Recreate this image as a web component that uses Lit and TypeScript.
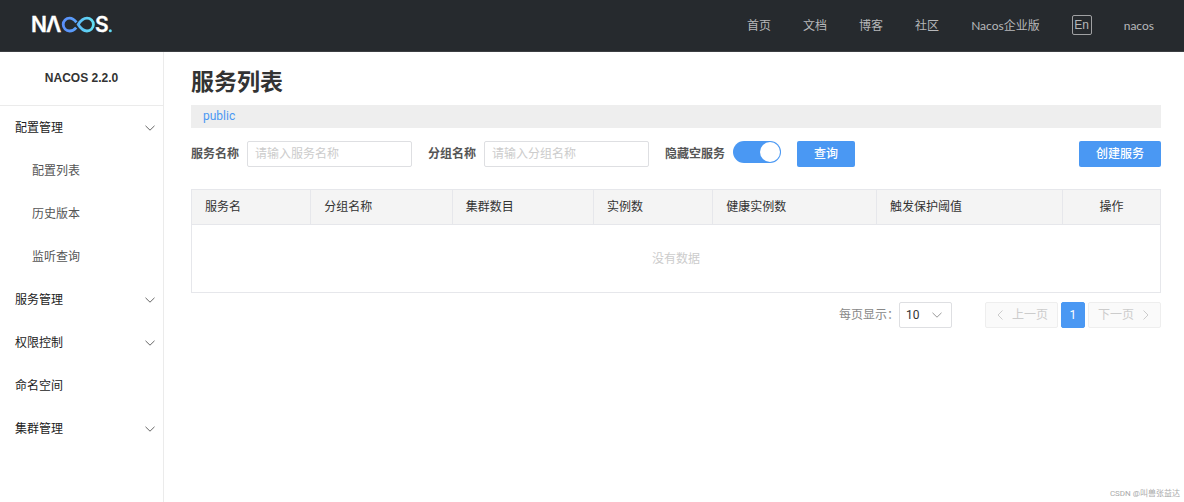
import { LitElement, html, css, svg, nothing } from "lit";
import { customElement, state } from "lit/decorators.js";

interface MenuItem {
  label: string;
  children?: string[];
  open?: boolean;
}

const NAV = ["首页", "文档", "博客", "社区", "Nacos企业版"];

const MENU: MenuItem[] = [
  { label: "配置管理", open: true, children: ["配置列表", "历史版本", "监听查询"] },
  { label: "服务管理", children: ["服务列表", "订阅者列表"] },
  { label: "权限控制", children: ["用户列表", "角色管理", "权限管理"] },
  { label: "命名空间" },
  { label: "集群管理", children: ["节点列表"] },
];

const COLUMNS = ["服务名", "分组名称", "集群数目", "实例数", "健康实例数", "触发保护阈值", "操作"];

const arrow = (points: string) => html`
  <svg class="arrow" viewBox="0 0 10 10" aria-hidden="true">
    ${svg`<polyline points=${points}></polyline>`}
  </svg>
`;
const arrowDown = () => arrow("0.5,2.8 5,7.2 9.5,2.8");
const arrowLeft = () => arrow("7.5,0.5 3,5 7.5,9.5");
const arrowRight = () => arrow("2.5,0.5 7,5 2.5,9.5");

const arrowStyles = css`
  .arrow {
    width: 10px;
    height: 10px;
    flex: none;
    fill: none;
    stroke: currentColor;
    stroke-width: 1;
  }
`;

@customElement("nacos-header")
export class NacosHeader extends LitElement {
  static styles = css`
    :host {
      display: block;
    }
    .bar {
      display: flex;
      align-items: center;
      justify-content: space-between;
      box-sizing: border-box;
      height: 52px;
      padding: 0 30px 2px 31px;
      background: #262a2e;
      border-bottom: 1px solid #3c3f43;
    }
    .logo {
      display: block;
      width: 82px;
      height: 32px;
      overflow: visible;
    }
    .word {
      font: 600 21px "Inter", sans-serif;
      fill: #fff;
      stroke: #fff;
      stroke-width: 0.3;
    }
    .nav {
      display: flex;
      align-items: center;
      gap: 32px;
      font-size: 12px;
    }
    .link {
      padding-top: 2px;
      color: #b7b8ba;
      text-decoration: none;
      font-family: Lato, "Noto Sans CJK SC", sans-serif;
    }
    .lang {
      box-sizing: border-box;
      width: 20px;
      height: 20px;
      padding: 0;
      border: 1px solid #a0a1a3;
      border-radius: 2px;
      background: none;
      color: #b7b8ba;
      font: 12px/18px "Liberation Sans", sans-serif;
    }
  `;

  render() {
    return html`
      <header class="bar">
        <svg class="logo" viewBox="0 -6 82 32" role="img" aria-label="NACOS.">
          <defs>
            <linearGradient id="loop" gradientUnits="userSpaceOnUse" x1="31" y1="0" x2="64" y2="0">
              <stop offset="0" stop-color="#5a8dfb"></stop>
              <stop offset="0.45" stop-color="#5aa2fa"></stop>
              <stop offset="0.55" stop-color="#5cc0f5"></stop>
              <stop offset="1" stop-color="#62e2f2"></stop>
            </linearGradient>
          </defs>
          <text class="word" x="0" y="17">N</text>
          <text class="word" x="15" y="17">Λ</text>
          <path
            d="M45.2 12.6C43.4 14.8 41.6 16 38.6 16A6.4 6.4 0 0 1 38.6 3.2C41.6 3.2 43.6 5 45.4 7.4"
            fill="none" stroke="url(#loop)" stroke-width="2.8"></path>
          <path
            d="M47.2 9.6C49.4 6 52 3.2 56 3.2A6.4 6.4 0 0 1 56 16C52 16 49.4 13.2 47.2 9.6Z"
            fill="none" stroke="url(#loop)" stroke-width="2.8"></path>
          <text class="word" x="64" y="17">S</text>
          <circle cx="79.3" cy="15.8" r="1.5" fill="#62d8f2"></circle>
        </svg>
        <nav class="nav">
          ${NAV.map((n) => html`<a class="link" href="#">${n}</a>`)}
          <button class="lang" type="button">En</button>
          <a class="link" href="#">nacos</a>
        </nav>
      </header>
    `;
  }
}

@customElement("nacos-menu")
export class NacosMenu extends LitElement {
  static styles = [
    arrowStyles,
    css`
      :host {
        display: block;
        border-right: 1px solid #ebebeb;
      }
      .version {
        margin: 0;
        border-bottom: 1px solid #ebebeb;
        color: #333;
        font: 700 12px/53px "Liberation Sans", sans-serif;
        text-align: center;
      }
      .list {
        margin: 0;
        padding: 0;
        list-style: none;
      }
      .item {
        display: flex;
        align-items: center;
        justify-content: space-between;
        box-sizing: border-box;
        width: 100%;
        height: 43px;
        padding: 0 8px 0 15px;
        border: 0;
        background: none;
        color: #222;
        font: inherit;
        text-decoration: none;
      }
      .sub {
        padding-left: 32px;
        color: #555;
      }
      .arrow {
        color: #666;
      }
    `,
  ];

  @state() private items = MENU;

  private toggle(index: number) {
    this.items = this.items.map((m, i) => (i === index ? { ...m, open: !m.open } : m));
  }

  render() {
    return html`
      <h2 class="version">NACOS 2.2.0</h2>
      <ul class="list">
        ${this.items.map(
          (m, i) => html`
            <li>
              ${m.children
                ? html`<button
                    class="item"
                    type="button"
                    aria-expanded=${m.open ? "true" : "false"}
                    @click=${() => this.toggle(i)}
                  >
                    ${m.label}${arrowDown()}
                  </button>`
                : html`<a class="item" href="#">${m.label}</a>`}
              ${m.children && m.open
                ? html`<ul class="list">
                    ${m.children.map((c) => html`<li><a class="item sub" href="#">${c}</a></li>`)}
                  </ul>`
                : nothing}
            </li>
          `
        )}
      </ul>
    `;
  }
}

@customElement("service-list")
export class ServiceList extends LitElement {
  static styles = [
    arrowStyles,
    css`
      :host {
        display: block;
        padding: 13px 23px 24px 27px;
      }
      .title {
        margin: 0;
        color: #333;
        font-size: 23px;
        font-weight: 700;
        line-height: 36px;
      }
      .namespace {
        margin: 4px 0 13px;
        padding: 0 12px;
        background: #eee;
        line-height: 23px;
      }
      .namespace-link {
        color: #4a98f3;
        text-decoration: none;
      }
      .filters {
        display: flex;
        flex-wrap: wrap;
        align-items: center;
        gap: 16px;
        margin-bottom: 22px;
      }
      .field {
        display: flex;
        align-items: center;
        gap: 8px;
      }
      .label {
        color: #555;
        font-weight: 700;
      }
      .input {
        box-sizing: border-box;
        width: 165px;
        height: 26px;
        padding: 0 7px;
        border: 1px solid #dedfe2;
        border-radius: 2px;
        background: #fff;
        color: #333;
        font: inherit;
      }
      .input::placeholder {
        color: #ccc;
        opacity: 1;
      }
      .switch {
        appearance: none;
        display: flex;
        justify-content: flex-end;
        box-sizing: border-box;
        width: 48px;
        height: 22px;
        margin: 0 0 4px;
        padding: 1px;
        border-radius: 11px;
        background: #4a98f3;
      }
      .switch::before {
        content: "";
        width: 20px;
        height: 20px;
        border-radius: 50%;
        background: #fff;
      }
      .switch:not(:checked) {
        justify-content: flex-start;
        background: #dedfe2;
      }
      .primary {
        height: 26px;
        padding: 0 17px;
        border: 0;
        border-radius: 2px;
        background: #4a98f3;
        color: #fff;
        font: inherit;
        font-weight: 500;
      }
      .create {
        margin-left: auto;
      }
      .table {
        width: 100%;
        table-layout: fixed;
        border-collapse: collapse;
        border: 1px solid #e6e7eb;
      }
      .th {
        box-sizing: border-box;
        height: 35px;
        padding: 0 13px;
        border: 1px solid #e6e7eb;
        background: #f4f4f4;
        color: #333;
        font-weight: 400;
        text-align: left;
      }
      .th:nth-child(1),
      .th:nth-child(4) {
        width: 12.3%;
      }
      .th:nth-child(2),
      .th:nth-child(3) {
        width: 14.6%;
      }
      .th:nth-child(5) {
        width: 16.9%;
      }
      .th:nth-child(6) {
        width: 19.2%;
      }
      .th:nth-child(7) {
        text-align: center;
      }
      .empty {
        box-sizing: border-box;
        height: 68px;
        padding: 0;
        color: #ccc;
        text-align: center;
      }
      .footer {
        display: flex;
        justify-content: flex-end;
        align-items: center;
        margin-top: 9px;
      }
      .size-label {
        color: #888;
      }
      .size {
        display: grid;
        align-items: center;
        width: 53px;
        margin-right: 33px;
      }
      .select {
        grid-area: 1 / 1;
        appearance: none;
        box-sizing: border-box;
        width: 100%;
        height: 26px;
        padding: 0 6px;
        border: 1px solid #dedfe2;
        border-radius: 2px;
        background: #fff;
        color: #333;
        font: inherit;
      }
      .size .arrow {
        grid-area: 1 / 1;
        justify-self: end;
        margin-right: 10px;
        color: #999;
        pointer-events: none;
      }
      .pages {
        display: flex;
        gap: 3px;
      }
      .page {
        display: flex;
        align-items: center;
        justify-content: center;
        gap: 7px;
        box-sizing: border-box;
        height: 26px;
        padding: 0 9px;
        border: 1px solid #eee;
        border-radius: 2px;
        background: #fafafa;
        color: #ccc;
        font: inherit;
      }
      .current {
        width: 24px;
        padding: 0;
        border-color: #4a98f3;
        background: #4a98f3;
        color: #fff;
      }
    `,
  ];

  render() {
    return html`
      <h1 class="title">服务列表</h1>
      <div class="namespace"><a class="namespace-link" href="#">public</a></div>
      <form class="filters" @submit=${(e: Event) => e.preventDefault()}>
        <div class="field">
          <label class="label" for="service">服务名称</label>
          <input class="input" id="service" type="text" placeholder="请输入服务名称" />
        </div>
        <div class="field">
          <label class="label" for="group">分组名称</label>
          <input class="input" id="group" type="text" placeholder="请输入分组名称" />
        </div>
        <div class="field">
          <label class="label" for="hide-empty">隐藏空服务</label>
          <input class="switch" id="hide-empty" type="checkbox" role="switch" checked />
        </div>
        <button class="primary" type="submit">查询</button>
        <button class="primary create" type="button">创建服务</button>
      </form>
      <table class="table">
        <thead>
          <tr>
            ${COLUMNS.map((c) => html`<th class="th" scope="col">${c}</th>`)}
          </tr>
        </thead>
        <tbody>
          <tr>
            <td class="empty" colspan=${COLUMNS.length}>没有数据</td>
          </tr>
        </tbody>
      </table>
      <div class="footer">
        <label class="size-label" for="page-size">每页显示：</label>
        <div class="size">
          <select class="select" id="page-size">
            <option selected>10</option>
            <option>20</option>
            <option>30</option>
            <option>50</option>
            <option>100</option>
          </select>
          ${arrowDown()}
        </div>
        <nav class="pages">
          <button class="page" type="button" disabled>${arrowLeft()}上一页</button>
          <button class="page current" type="button" aria-current="page">1</button>
          <button class="page" type="button" disabled>下一页${arrowRight()}</button>
        </nav>
      </div>
    `;
  }
}

@customElement("app-root")
export class AppRoot extends LitElement {
  static styles = css`
    :host {
      display: flex;
      flex-direction: column;
      position: relative;
      min-height: 100vh;
      background: #fff;
      color: #333;
      font: 12px/18px Roboto, "Noto Sans CJK SC", sans-serif;
    }
    .body {
      display: flex;
      flex: 1;
    }
    .side {
      flex: 0 0 163px;
    }
    .main {
      flex: 1;
      min-width: 0;
    }
    .watermark {
      position: absolute;
      right: 4px;
      bottom: 2px;
      color: #aaa;
      font-size: 8px;
      line-height: 12px;
    }
  `;

  render() {
    return html`
      <nacos-header></nacos-header>
      <div class="body">
        <nacos-menu class="side"></nacos-menu>
        <service-list class="main"></service-list>
      </div>
      <span class="watermark">CSDN @叫兽张益达</span>
    `;
  }
}
